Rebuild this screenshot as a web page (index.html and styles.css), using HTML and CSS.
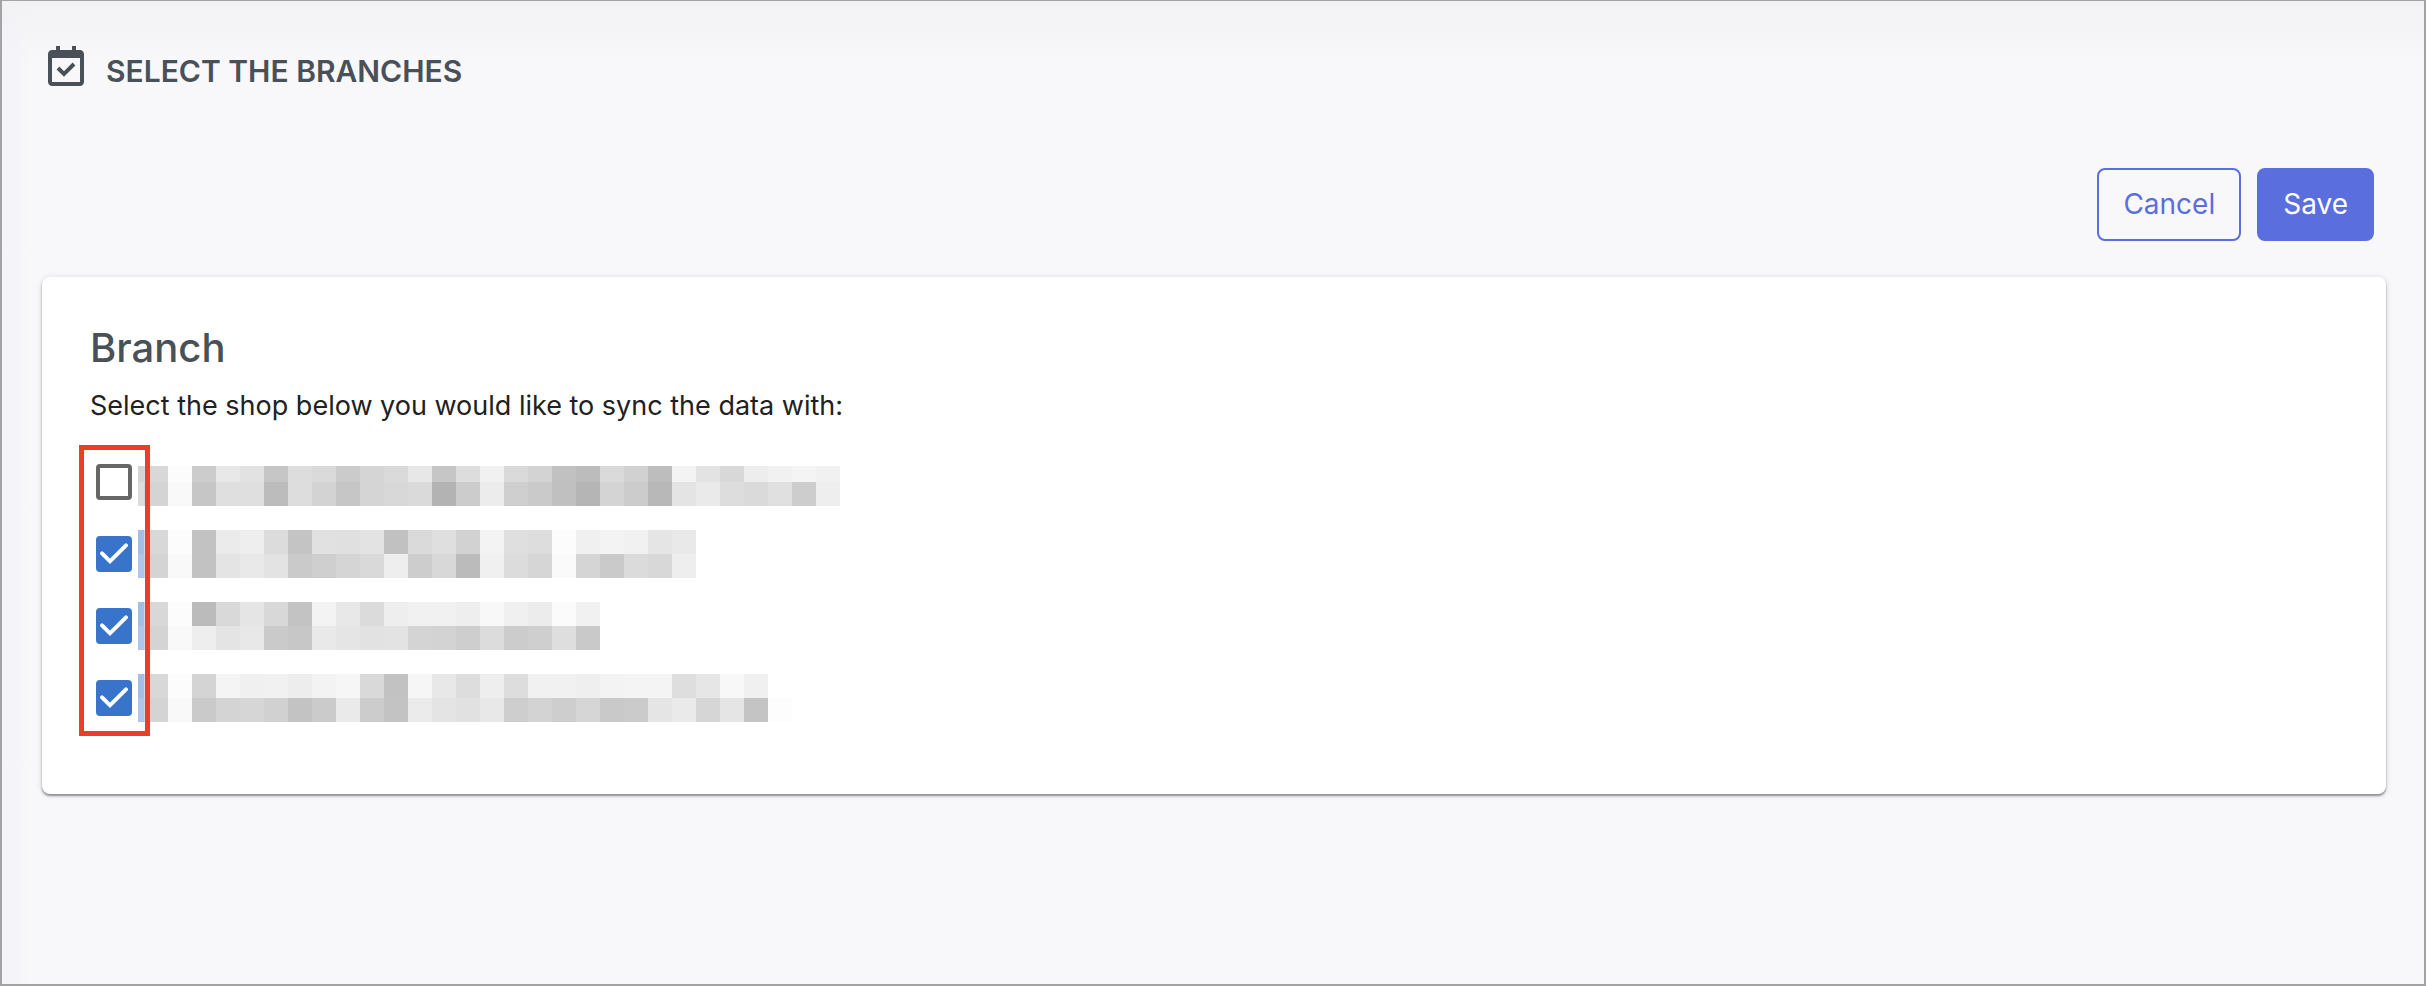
FILE: index.html
```html
<!DOCTYPE html>
<html lang="en">
<head>
<meta charset="utf-8">
<title>Select the branches</title>
<link rel="stylesheet" href="styles.css">
</head>
<body>
<main class="page">
  <header class="page-header">
    <svg class="page-icon" viewBox="0 0 24 24" aria-hidden="true">
      <path d="M19 4h-2V2h-2v2H9V2H7v2H5c-1.103 0-2 .897-2 2v14c0 1.103.897 2 2 2h14c1.103 0 2-.897 2-2V6c0-1.103-.897-2-2-2zm0 16H5V8h14z"/>
      <path d="m11 17.414 5.707-5.707-1.414-1.414L11 14.586l-2.293-2.293-1.414 1.414z"/>
    </svg>
    <h1 class="page-title">SELECT THE BRANCHES</h1>
  </header>

  <div class="actions">
    <button class="btn btn-outline" type="button">Cancel</button>
    <button class="btn btn-primary" type="submit">Save</button>
  </div>

  <section class="card">
    <h2 class="card-title">Branch</h2>
    <p class="card-text">Select the shop below you would like to sync the data with:</p>
    <div class="branches">
      <label class="branch">
        <span class="check"><input class="check-input" type="checkbox" aria-label="Branch 1"><svg class="check-mark" viewBox="0 0 36 36" aria-hidden="true"><path d="M6 17.3l8 8L30 9.4"/></svg></span>
        <span class="mosaic mosaic-short" data-top="d8 fc cc e8 e2 c6 dd da cb d5 da e7 c6 dd f1 da d3 c1 bc da d1 bd f3 e3 d8 ed f1 f4 f1" data-bottom="d4 f9 c6 df df bc dd d3 c6 d5 d8 da b3 cc ec cf ca c0 b5 d4 cc b8 e4 ea dd da e0 cd ee"></span>
      </label>
      <label class="branch">
        <span class="check"><input class="check-input" type="checkbox" aria-label="Branch 2" checked><svg class="check-mark" viewBox="0 0 36 36" aria-hidden="true"><path d="M6 17.3l8 8L30 9.4"/></svg></span>
        <span class="mosaic mosaic-blue" data-top="d8 fc c2 eb ee dc c4 e1 e0 e3 c1 da df d2 f3 df dd fc f0 f3 f1 e5 e9" data-bottom="d4 f9 c2 e4 e9 e3 ca cf d5 d9 ee cd d8 bb f0 dc d6 fa d5 ca db d8 ee"></span>
      </label>
      <label class="branch">
        <span class="check"><input class="check-input" type="checkbox" aria-label="Branch 3" checked><svg class="check-mark" viewBox="0 0 36 36" aria-hidden="true"><path d="M6 17.3l8 8L30 9.4"/></svg></span>
        <span class="mosaic mosaic-blue" data-top="d8 fc bb d9 e5 d8 c3 f3 e8 db ee f1 f1 ee f8 f0 ec fb f1" data-bottom="d4 f9 ee e4 e8 ca c7 e9 e5 e2 e3 d4 d3 ce dc cc cf de c9"></span>
      </label>
      <label class="branch">
        <span class="check"><input class="check-input" type="checkbox" aria-label="Branch 4" checked><svg class="check-mark" viewBox="0 0 36 36" aria-hidden="true"><path d="M6 17.3l8 8L30 9.4"/></svg></span>
        <span class="mosaic mosaic-blue" data-top="d8 fc d4 f4 f0 f1 ed f3 f6 d9 c2 f6 e8 dd ee dd f1 f1 ef f3 f4 f4 de e6 f8 f0 ff" data-bottom="d4 f9 ca d4 d6 d1 c3 cb ea cc c3 eb e4 e1 e8 ce d3 ce d6 c9 cb e5 ea d6 e5 c4 fd"></span>
      </label>
      <div class="highlight"></div>
    </div>
  </section>
</main>
<script src="script.js"></script>
</body>
</html>
```

FILE: styles.css
```css
* {
  box-sizing: border-box;
}

body {
  margin: 0;
  font-family: Inter, "Open Sans", sans-serif;
  color: #212121;
}

.page {
  min-height: 100vh;
  padding: 41px 38px 40px 40px;
  border: 2px solid #a3a3a5;
  border-top-width: 1px;
  background:
    linear-gradient(to bottom, #f2f2f5, rgba(248, 248, 251, 0) 60px),
    linear-gradient(to right, #f4f4f9, #f8f8fb 30px);
}

.page-header {
  display: flex;
  align-items: center;
  gap: 16px;
  margin-bottom: 78px;
}

.page-icon {
  width: 48px;
  height: 48px;
  fill: #495057;
}

.page-title {
  margin: 0;
  padding-top: 10px;
  font-size: 30px;
  line-height: 38px;
  font-weight: 600;
  color: #495057;
}

.actions {
  display: flex;
  justify-content: flex-end;
  gap: 16px;
  margin-bottom: 36px;
  padding-right: 12px;
}

.btn {
  padding: 14px 24px;
  border: 2px solid #5a6ede;
  border-radius: 8px;
  font: inherit;
  font-size: 28px;
  line-height: 41px;
}

.btn-outline {
  background: transparent;
  color: #5a6ede;
}

.btn-primary {
  background: #5a6ede;
  color: #fff;
}

.card {
  padding: 48px 48px 60px;
  border-radius: 8px;
  background: #fff;
  box-shadow: 0 2px 2px rgba(60, 60, 68, 0.5), 0 1px 6px rgba(0, 0, 0, 0.14);
}

.card-title {
  margin: 0 0 16px;
  font-size: 40px;
  line-height: 45px;
  font-weight: 500;
  color: #495057;
}

.card-text {
  margin: 0 0 20px;
  font-size: 27px;
  line-height: 40px;
}

.branches {
  position: relative;
}

.branch {
  display: flex;
  align-items: center;
  gap: 6px;
  height: 72px;
  padding-left: 6px;
}

.check {
  position: relative;
  width: 36px;
  height: 36px;
}

.check-input {
  appearance: none;
  display: block;
  width: 100%;
  height: 100%;
  margin: 0;
  border: 4px solid #666;
  border-radius: 4px;
}

.check-input:checked {
  border-color: #3874cb;
  background: #3874cb;
}

.check-mark {
  position: absolute;
  inset: 0;
  fill: none;
  stroke: #fff;
  stroke-width: 4;
  stroke-linecap: round;
  visibility: hidden;
}

.check-input:checked + .check-mark {
  visibility: visible;
}

.mosaic {
  display: grid;
  grid-auto-flow: column;
  grid-template-rows: 24px 24px;
  grid-template-columns: 6px;
  grid-auto-columns: 24px;
  align-self: flex-end;
  margin-bottom: 12px;
}

.mosaic-short {
  grid-template-rows: 16px 24px;
}

.highlight {
  position: absolute;
  top: -1px;
  bottom: -2px;
  left: -11px;
  width: 71px;
  border: 5px solid #e94025;
  pointer-events: none;
}
```

FILE: script.js
```js
// Fills each masked branch name with its two rows of grey cells.
function addCell(parent, color) {
  const cell = document.createElement("span");
  cell.style.backgroundColor = color;
  parent.append(cell);
}

document.querySelectorAll(".mosaic").forEach((mosaic) => {
  const top = mosaic.dataset.top.split(" ");
  const bottom = mosaic.dataset.bottom.split(" ");
  const blue = mosaic.classList.contains("mosaic-blue");
  addCell(mosaic, blue ? "#a2bde6" : "#d4d4d4");
  addCell(mosaic, blue ? "#afc6ea" : "#dcdcdc");
  top.forEach((shade, i) => {
    addCell(mosaic, "#" + shade.repeat(3));
    addCell(mosaic, "#" + bottom[i].repeat(3));
  });
});
```
